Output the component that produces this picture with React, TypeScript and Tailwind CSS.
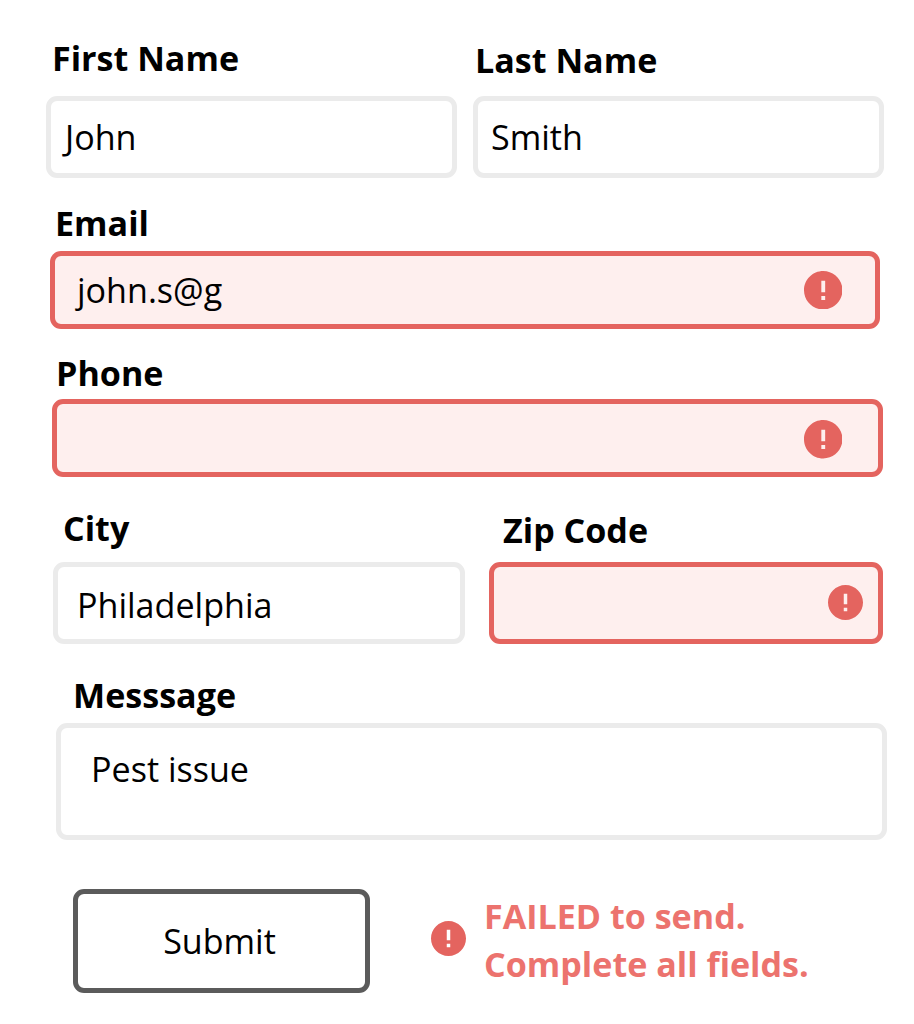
import clsx from 'clsx';
import type { ReactNode } from 'react';

interface FieldProps {
  label: string;
  className?: string;
  labelClass?: string;
  boxClass?: string;
  error?: boolean;
  children?: ReactNode;
}

function ErrorIcon({ className }: { className?: string }) {
  return (
    <svg className={clsx('shrink-0 fill-[#e4645f]', className)} viewBox="2 2 20 20">
      <path d="M12 2C6.48 2 2 6.48 2 12s4.48 10 10 10 10-4.48 10-10S17.52 2 12 2zm1 15h-2v-2h2v2zm0-4h-2V7h2v6z" />
    </svg>
  );
}

function Field({ label, className, labelClass, boxClass, error, children }: FieldProps) {
  return (
    <div className={clsx('flex flex-col', className)}>
      <p className={clsx('font-bold whitespace-nowrap', labelClass)}>{label}</p>
      <div
        className={clsx(
          'flex rounded-[11px] border-5',
          error ? 'border-[#e4645f] bg-[#feefee]' : 'border-[#ebebeb] bg-white',
          boxClass,
        )}
      >
        {children}
      </div>
    </div>
  );
}

export default function App() {
  return (
    <form className="flex h-[1024px] w-[914px] flex-col items-start bg-white pt-[34px] font-['Open_Sans',sans-serif] text-[34.1px] leading-[48px] text-black">
      <div className="ml-[46px] flex gap-4">
        <Field label="First Name" className="w-[411px]" labelClass="mb-[14px] pl-[6px]" boxClass="h-[82px] items-center pl-[14px]">
          <span>John</span>
        </Field>
        <Field label="Last Name" className="w-[411px] pt-[2px]" labelClass="mb-3 pl-[2px]" boxClass="h-[82px] items-center pl-[13px]">
          <span>Smith</span>
        </Field>
      </div>

      <Field
        label="Email"
        error
        className="mt-[21px] ml-[50px] w-[830px]"
        labelClass="mb-1 pl-[5px]"
        boxClass="h-[78px] items-center justify-between pr-[33px] pl-[22px]"
      >
        <span>john.s@g</span>
        <ErrorIcon className="size-[38.5px]" />
      </Field>

      <Field
        label="Phone"
        error
        className="mt-5 ml-[52px] w-[831px]"
        labelClass="mb-0.5 pl-[4px]"
        boxClass="h-[78px] items-center justify-end pt-[3px] pr-[36px]"
      >
        <ErrorIcon className="size-[38.5px]" />
      </Field>

      <div className="mt-[27px] ml-[53px] flex gap-6">
        <Field label="City" className="w-[412px]" labelClass="mb-[10px] pl-[10px]" boxClass="h-[82px] items-center pt-1 pl-[19px]">
          <span>Philadelphia</span>
        </Field>
        <Field
          label="Zip Code"
          error
          className="w-[394px] pt-[2px]"
          labelClass="mb-2 pl-[14px]"
          boxClass="h-[82px] items-center justify-end pr-[15px] pb-px"
        >
          <ErrorIcon className="size-[35px]" />
        </Field>
      </div>

      <Field
        label="Messsage"
        className="mt-[27px] ml-[56px] w-[831px]"
        labelClass="mb-1 pl-[17px]"
        boxClass="h-[117px] items-start pt-[17px] pl-[30px]"
      >
        <span>Pest issue</span>
      </Field>

      <div className="mt-[49px] ml-[73px] flex items-start">
        <button
          type="button"
          className="flex h-[104px] w-[297px] items-center justify-center rounded-[11px] border-5 border-[#5b5b5b] bg-white pr-[4px]"
        >
          Submit
        </button>
        <ErrorIcon className="mt-8 ml-[61px] size-[35px]" />
        <p className="mt-[4px] ml-[18px] leading-[47.5px] font-bold whitespace-nowrap text-[#ec736e]">
          FAILED to send.
          <br />
          Complete all fields.
        </p>
      </div>
    </form>
  );
}
